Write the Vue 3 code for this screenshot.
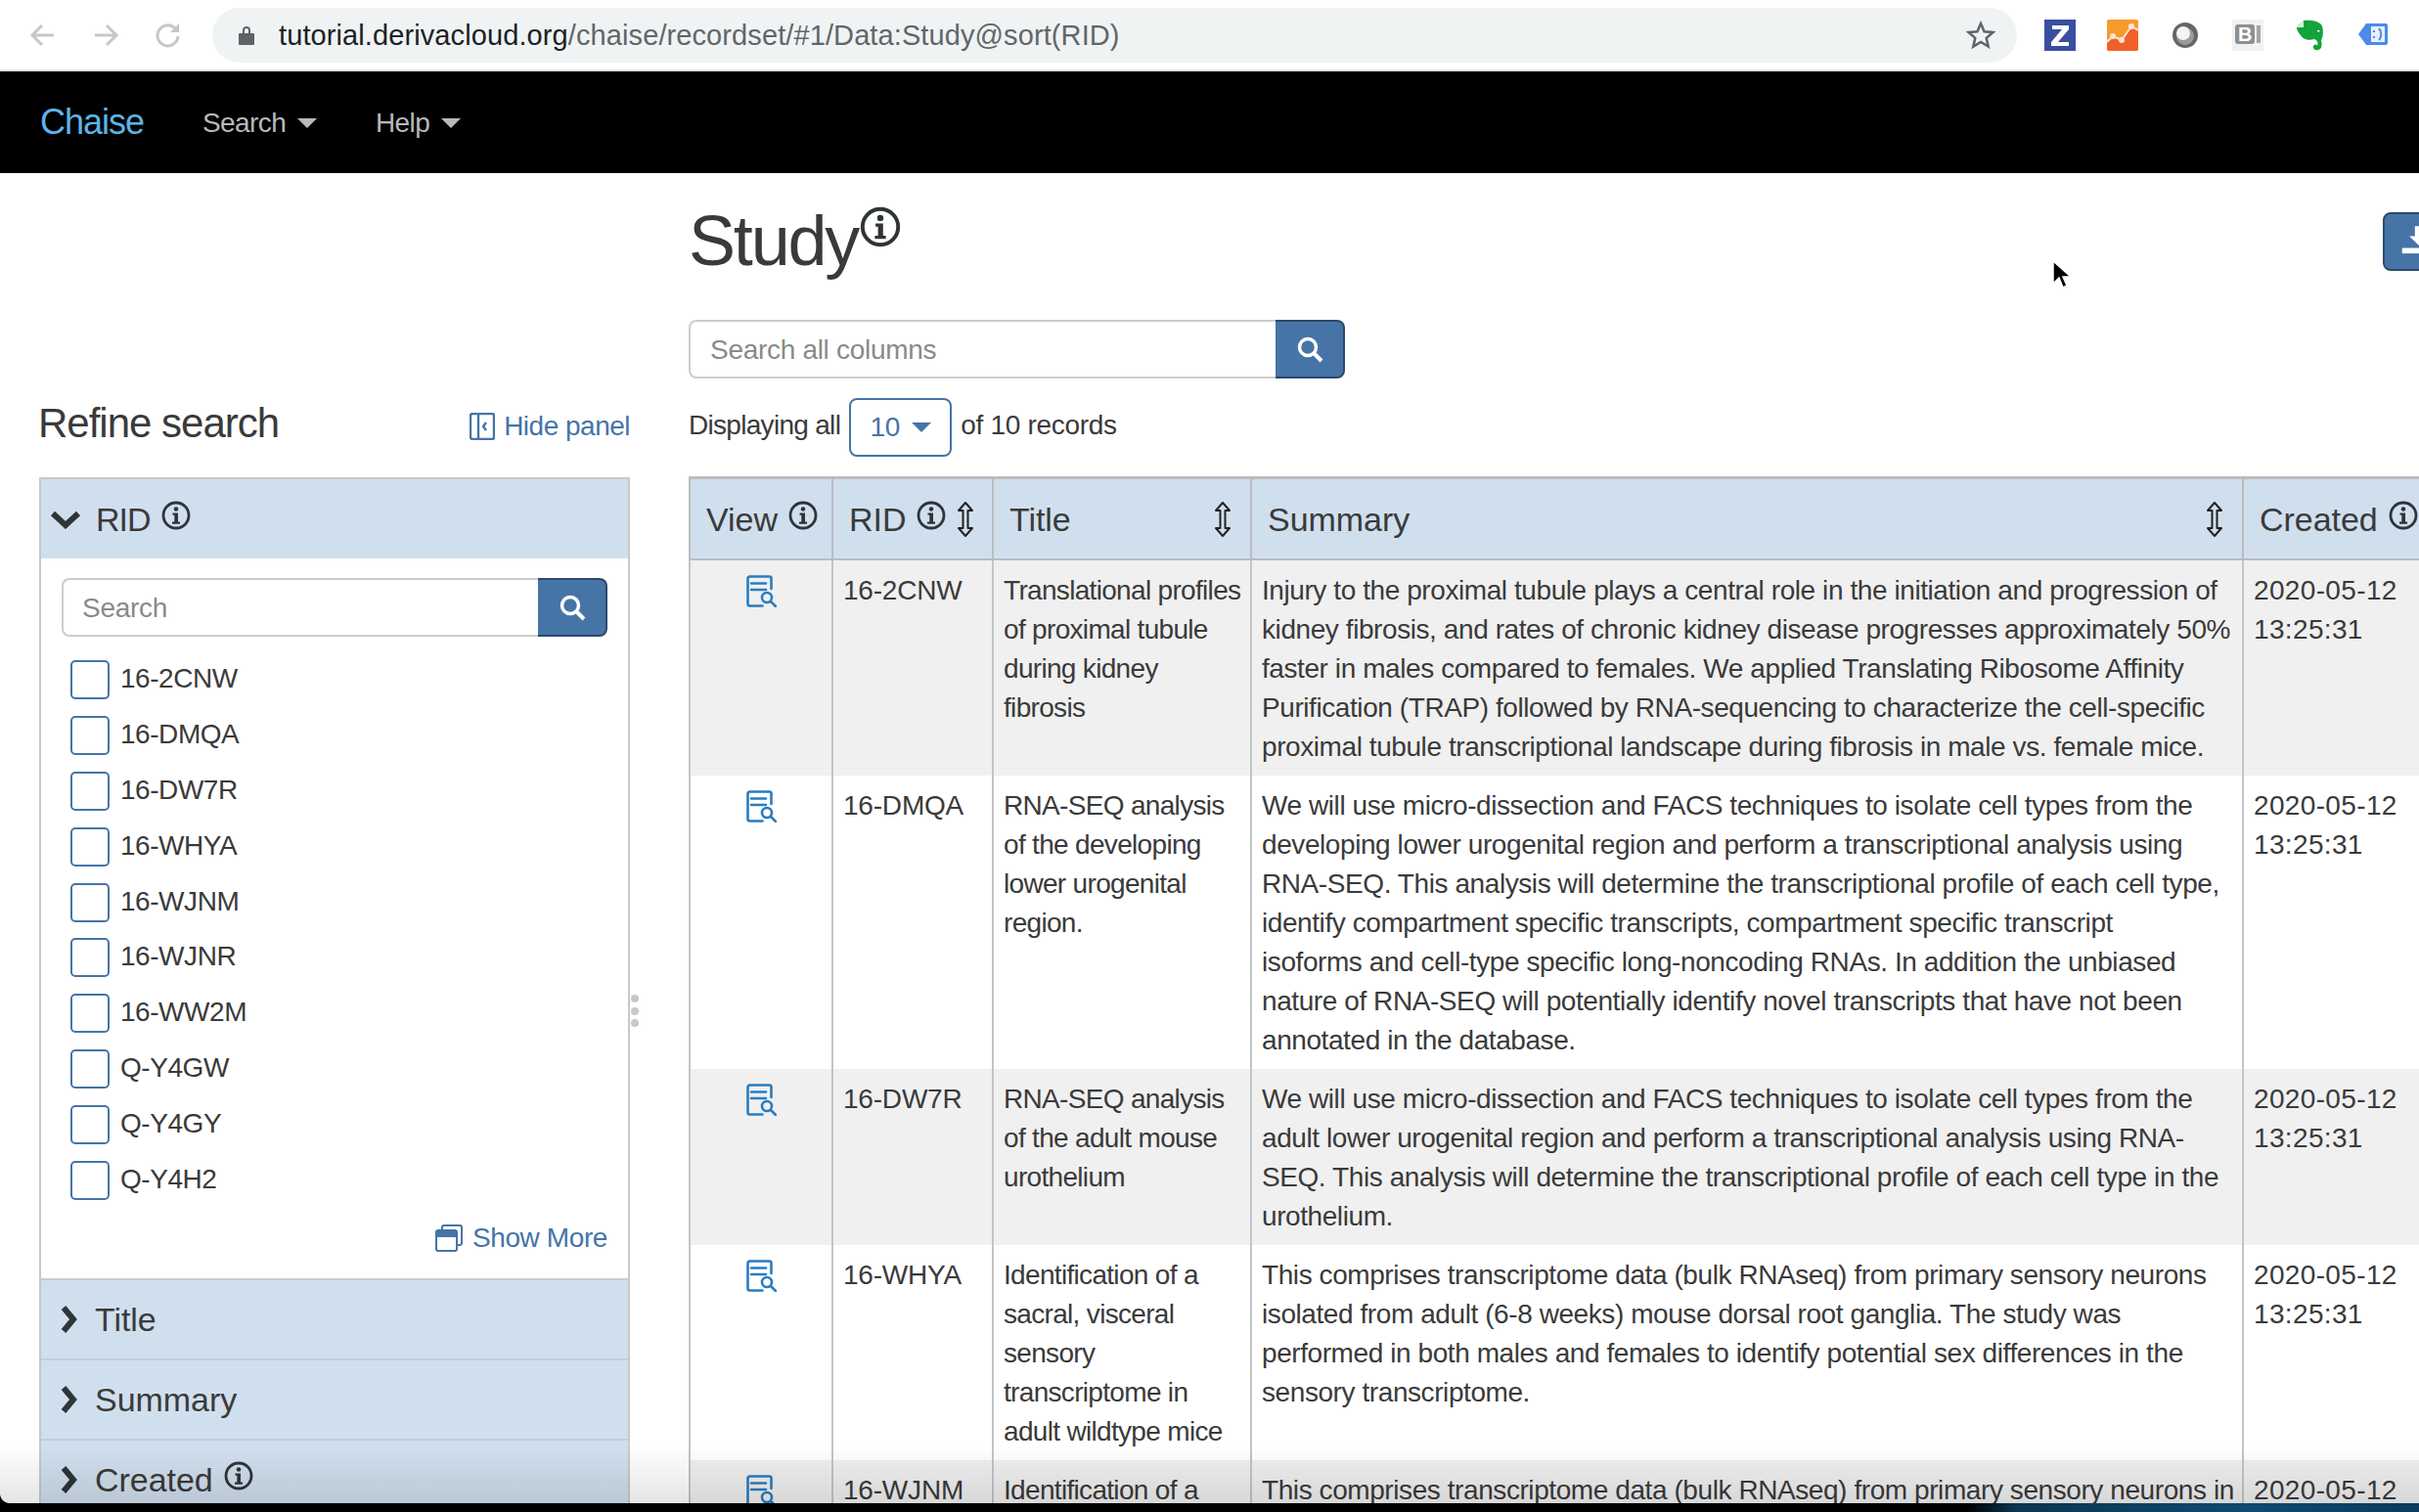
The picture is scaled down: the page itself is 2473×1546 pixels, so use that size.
<template>
  <div class="page">
    <div class="browser">
      <div class="nav-btns">
        <svg class="nav-ic" viewBox="0 0 32 32"><path d="M27 16H6M15 6 5 16l10 10" /></svg>
        <svg class="nav-ic" viewBox="0 0 32 32"><path d="M5 16h21M17 6l10 10-10 10" /></svg>
        <svg class="nav-ic" viewBox="0 0 32 32"><path d="M26 17a10.500 10.500 0 1 1-3-8" /><path class="fill" d="M27 4v9h-9z" /></svg>
      </div>
      <div class="url-pill">
        <svg class="lock" viewBox="0 0 18 22"><path d="M2 9h14a1 1 0 0 1 1 1v10a1 1 0 0 1-1 1H2a1 1 0 0 1-1-1V10a1 1 0 0 1 1-1zM5 9V6a4 4 0 0 1 8 0v3h-2V6a2 2 0 0 0-4 0v3z" /></svg>
        <span class="url"><b>tutorial.derivacloud.org</b>/chaise/recordset/#1/Data:Study@sort(RID)</span>
        <svg class="star" viewBox="0 0 30 30"><path d="m15 3 3.500 8.200 8.900.8-6.700 5.900 2 8.700-7.700-4.600-7.700 4.600 2-8.700L2.600 12l8.900-.8z" /></svg>
      </div>
      <div class="exts">
        <svg class="ext" viewBox="0 0 32 32"><rect x="0" y="0" width="32" height="32" fill="#3a4ea0" /><path d="M8 6h17v4L14 23h11v4H7v-4l11-13H8z" fill="#fff" /></svg>
        <svg class="ext" viewBox="0 0 32 32"><rect width="32" height="32" rx="2" fill="#f79a2e" /><path d="M0 23l6-6 9 4L25 7l7 4v19a2 2 0 0 1-2 2H2a2 2 0 0 1-2-2z" fill="#f2602a" /><path d="M0 23l6-6 9 4L25 7l7 4" fill="none" stroke="#fbe6d4" stroke-width="2" /><circle cx="6" cy="17" r="3" fill="#fbe6d4" /><circle cx="15" cy="21" r="3" fill="#fbe6d4" /><circle cx="25" cy="7" r="3" fill="#fbe6d4" /></svg>
        <svg class="ext" viewBox="0 0 32 32"><circle cx="16" cy="16" r="13" fill="#666" /><circle cx="16" cy="17" r="9" fill="#9a9a9a" /><circle cx="14" cy="14" r="7" fill="#f4f4f4" /></svg>
        <svg class="ext" viewBox="0 0 32 32"><rect y="0" width="32" height="32" fill="#f1f1f1" /><rect x="3" y="5" width="20" height="20" rx="3" fill="#8f8f8f" /><rect x="25" y="6" width="4" height="18" fill="#a5a5a5" /><text x="13" y="22" text-anchor="middle" class="ext-b">B</text></svg>
        <svg class="ext" viewBox="0 0 32 32"><path d="M9 1C14 0 24 1 27 5c3 5 2 13 0 16 1 5 1 9-3 10-4 1-6-2-5-4 1-2 4-2 4 0 1-3 0-6-3-7-6 2-12 0-14-4-3-3-4-6-4-8z" fill="#12a33b" /><path d="M9 1v7H2z" fill="#d6f0dc" /><rect x="23" y="11" width="2.500" height="1.500" fill="#e8f7ec" /></svg>
        <svg class="ext" viewBox="0 0 32 32"><path d="M9 4h20a2 2 0 0 1 2 2v18a2 2 0 0 1-2 2H9l-8-11z" fill="#4c8be8" /><rect x="14" y="7" width="14" height="16" rx="1" fill="#e7f0fd" /><path d="M17 11v2M17 17v2M22 9c3 3 3 9 0 12" stroke="#4c8be8" stroke-width="2" fill="none" /></svg>
      </div>
    </div>

    <nav class="navbar">
      <a class="brand">Chaise</a>
      <a class="nav-link">Search<i class="caret" /></a>
      <a class="nav-link">Help<i class="caret" /></a>
    </nav>

    <div class="content">
      <aside class="sidebar">
        <div class="side-head">
          <h2>Refine search</h2>
          <a class="link hide-link">
            <svg class="hide-ic" viewBox="0 0 26 28"><rect x="1" y="1" width="24" height="26" rx="2" /><path d="M9 1v26M17 10l-3 4 3 4" /></svg>
            Hide panel
          </a>
        </div>
        <div class="facets">
          <div class="facet-head">
            <svg class="chev-down" viewBox="0 0 32 20"><path d="M3 4l13 12L29 4" /></svg>
            <span class="facet-name rid">RID</span>
            <svg class="info info-sm" viewBox="0 0 30 30"><use href="#info-ic" /></svg>
          </div>
          <div class="facet-body">
            <div class="search-group">
              <div class="search-input">Search</div>
              <div class="search-btn"><svg viewBox="0 0 28 28"><use href="#mag-ic" /></svg></div>
            </div>
            <div class="check-list">
              <div v-for="rid in rids" :key="rid" class="check-row">
                <span class="box" />
                <span>{{ rid }}</span>
              </div>
            </div>
            <a class="link show-more">
              <svg class="more-ic" viewBox="0 0 28 28"><rect x="7" y="1" width="20" height="20" rx="2" class="more-back" /><rect x="1" y="6" width="21" height="21" rx="2" class="more-front" /><rect x="1" y="6" width="21" height="7" fill="#4674a7" /></svg>
              Show More
            </a>
          </div>
          <div v-for="f in closedFacets" :key="f.name" class="facet-head closed">
            <svg class="chev-right" viewBox="0 0 18 32"><path d="M4 4l10 12L4 28" /></svg>
            <span class="facet-name">{{ f.name }}</span>
            <svg v-if="f.info" class="info info-sm" viewBox="0 0 30 30"><use href="#info-ic" /></svg>
          </div>
        </div>
      </aside>

      <div class="splitter"><i /><i /><i /></div>

      <main class="main">
        <div class="title-row">
          <h1>Study</h1>
          <svg class="info info-lg" viewBox="0 0 30 30"><use href="#info-ic" /></svg>
        </div>
        <div class="search-group all">
          <div class="search-input">Search all columns</div>
          <div class="search-btn"><svg viewBox="0 0 28 28"><use href="#mag-ic" /></svg></div>
        </div>
        <div class="count-row">
          <span class="count-text tight">Displaying all</span>
          <div class="limit">10<i class="caret blue" /></div>
          <span class="count-text">of 10 records</span>
        </div>
        <div class="table-wrap">
          <table class="records">
            <colgroup>
              <col class="c-view" /><col class="c-rid" /><col class="c-title" /><col class="c-summary" /><col class="c-created" />
            </colgroup>
            <thead>
              <tr>
                <th><span class="th-in">View<svg class="info info-sm" viewBox="0 0 30 30"><use href="#info-ic" /></svg></span></th>
                <th><span class="th-in">RID<svg class="info info-sm" viewBox="0 0 30 30"><use href="#info-ic" /></svg><svg class="sort" viewBox="0 0 20 38"><use href="#sort-ic" /></svg></span></th>
                <th><span class="th-in spread">Title<svg class="sort" viewBox="0 0 20 38"><use href="#sort-ic" /></svg></span></th>
                <th><span class="th-in spread">Summary<svg class="sort" viewBox="0 0 20 38"><use href="#sort-ic" /></svg></span></th>
                <th><span class="th-in">Created<svg class="info info-sm" viewBox="0 0 30 30"><use href="#info-ic" /></svg></span></th>
              </tr>
            </thead>
            <tbody>
              <tr v-for="row in rows" :key="row.rid">
                <td class="view-cell">
                  <svg class="view-ic" viewBox="0 0 31 33"><path d="M25.500 14V3.500a2 2 0 0 0-2-2h-20a2 2 0 0 0-2 2v26a2 2 0 0 0 2 2h13" /><path d="M5 8.500h15M5 15h15" /><circle cx="21" cy="23" r="5" /><path d="M25 27l5 5" /></svg>
                </td>
                <td class="rid-cell">{{ row.rid }}</td>
                <td class="title-cell"><span v-for="l in row.title" :key="l" class="line">{{ l }}</span></td>
                <td class="summary-cell"><span v-for="l in row.summary" :key="l" class="line">{{ l }}</span></td>
                <td class="date-cell"><span class="line">2020-05-12</span><span class="line">13:25:31</span></td>
              </tr>
            </tbody>
          </table>
        </div>
      </main>

      <div class="export-btn">
        <svg viewBox="0 0 60 60"><path d="M33 13h8v11h6L37 34 27 24h6z" fill="#fff" /><rect x="19" y="37" width="30" height="6" fill="#fff" /></svg>
      </div>
      <svg class="cursor" viewBox="0 0 24 32"><path d="M2 2v23l6-6 4 10 4-2-4-9h8z" /></svg>
    </div>

    <div class="dock-fade" />
    <div class="corner" />
    <div class="dock" />

    <svg class="defs" width="0" height="0">
      <defs>
        <g id="info-ic">
          <circle cx="15" cy="15" r="13" fill="none" stroke="currentColor" stroke-width="2.800" />
          <circle cx="15" cy="8.500" r="2.300" fill="currentColor" />
          <path d="M11.500 12.500h5.500v9h2v2.300h-8v-2.300h2.300v-6.700h-1.800z" fill="currentColor" />
        </g>
        <g id="mag-ic" fill="none" stroke="#fff">
          <circle cx="12" cy="12" r="8.500" stroke-width="3.500" />
          <path d="M18 18l8 8" stroke-width="4" />
        </g>
        <path id="sort-ic" d="M10 2l7 8h-4.500v18H17l-7 8-7-8h4.500V10H3z" fill="none" stroke="#222" stroke-width="2" stroke-linejoin="round" />
      </defs>
    </svg>
  </div>
</template>

<script setup>
const rids = ['16-2CNW', '16-DMQA', '16-DW7R', '16-WHYA', '16-WJNM', '16-WJNR', '16-WW2M', 'Q-Y4GW', 'Q-Y4GY', 'Q-Y4H2']

const closedFacets = [
  { name: 'Title' },
  { name: 'Summary' },
  { name: 'Created', info: true },
]

const rows = [
  {
    rid: '16-2CNW',
    title: ['Translational profiles', 'of proximal tubule', 'during kidney', 'fibrosis'],
    summary: [
      'Injury to the proximal tubule plays a central role in the initiation and progression of',
      'kidney fibrosis, and rates of chronic kidney disease progresses approximately 50%',
      'faster in males compared to females. We applied Translating Ribosome Affinity',
      'Purification (TRAP) followed by RNA-sequencing to characterize the cell-specific',
      'proximal tubule transcriptional landscape during fibrosis in male vs. female mice.',
    ],
  },
  {
    rid: '16-DMQA',
    title: ['RNA-SEQ analysis', 'of the developing', 'lower urogenital', 'region.'],
    summary: [
      'We will use micro-dissection and FACS techniques to isolate cell types from the',
      'developing lower urogenital region and perform a transcriptional analysis using',
      'RNA-SEQ. This analysis will determine the transcriptional profile of each cell type,',
      'identify compartment specific transcripts, compartment specific transcript',
      'isoforms and cell-type specific long-noncoding RNAs. In addition the unbiased',
      'nature of RNA-SEQ will potentially identify novel transcripts that have not been',
      'annotated in the database.',
    ],
  },
  {
    rid: '16-DW7R',
    title: ['RNA-SEQ analysis', 'of the adult mouse', 'urothelium'],
    summary: [
      'We will use micro-dissection and FACS techniques to isolate cell types from the',
      'adult lower urogenital region and perform a transcriptional analysis using RNA-',
      'SEQ. This analysis will determine the transcriptional profile of each cell type in the',
      'urothelium.',
    ],
  },
  {
    rid: '16-WHYA',
    title: ['Identification of a', 'sacral, visceral', 'sensory', 'transcriptome in', 'adult wildtype mice'],
    summary: [
      'This comprises transcriptome data (bulk RNAseq) from primary sensory neurons',
      'isolated from adult (6-8 weeks) mouse dorsal root ganglia. The study was',
      'performed in both males and females to identify potential sex differences in the',
      'sensory transcriptome.',
    ],
  },
  {
    rid: '16-WJNM',
    title: ['Identification of a'],
    summary: ['This comprises transcriptome data (bulk RNAseq) from primary sensory neurons in'],
  },
]
</script>

<style>
html, body {
  margin: 0;
  background: #fff;
  overflow: hidden;
}
</style>

<style scoped>
.page {
  position: relative;
  width: 2473px;
  height: 1546px;
  overflow: hidden;
  font-family: "Liberation Sans", Arial, sans-serif;
  font-size: 28px;
  line-height: 40px;
  color: #3a3a3a;
  letter-spacing: -0.3px;
}

/* browser chrome */
.browser {
  height: 71px;
  display: flex;
  align-items: center;
  border-bottom: 2px solid #dfe1e3;
  background: #fff;
}
.nav-btns {
  display: flex;
  gap: 32px;
  margin-left: 28px;
  width: 189px;
}
.nav-ic {
  width: 32px;
  height: 32px;
  fill: none;
  stroke: #c6c7c9;
  stroke-width: 3;
}
.nav-ic .fill {
  fill: #c6c7c9;
  stroke: none;
}
.url-pill {
  width: 1845px;
  height: 56px;
  border-radius: 28px;
  background: #f0f3f4;
  display: flex;
  align-items: center;
  padding: 0 22px 0 26px;
  box-sizing: border-box;
}
.lock {
  width: 18px;
  height: 22px;
  fill: #5f6368;
}
.url {
  margin-left: 24px;
  flex: 1;
  color: #636669;
  font-size: 29px;
  letter-spacing: 0.1px;
}
.url b {
  font-weight: normal;
  color: #202124;
}
.star {
  width: 30px;
  height: 30px;
  fill: none;
  stroke: #5f6368;
  stroke-width: 2.500;
}
.exts {
  display: flex;
  gap: 32px;
  margin-left: 28px;
}
.ext {
  width: 32px;
  height: 32px;
}
.ext-b {
  font-family: "Liberation Sans", sans-serif;
  font-weight: bold;
  font-size: 20px;
  fill: #fff;
}

/* site nav */
.navbar {
  height: 104px;
  background: #000;
  display: flex;
  align-items: center;
  color: #b9b9b9;
  padding-left: 41px;
}
.brand {
  color: #5db4e8;
  font-size: 36px;
  letter-spacing: -1px;
  width: 166px;
}
.nav-link {
  display: flex;
  align-items: center;
  width: 177px;
  padding-top: 2px;
  letter-spacing: -0.6px;
}
.caret {
  display: inline-block;
  width: 0;
  height: 0;
  margin-left: 12px;
  border-left: 10px solid transparent;
  border-right: 10px solid transparent;
  border-top: 10px solid #b9b9b9;
}
.caret.blue {
  border-top-color: #4674a7;
}

/* page body */
.content {
  position: relative;
  display: flex;
  height: 1360px;
}
.sidebar {
  width: 604px;
  margin-left: 40px;
  padding-top: 231px;
  flex: none;
}
.side-head {
  display: flex;
  align-items: center;
  justify-content: space-between;
  height: 50px;
  margin-bottom: 30px;
}
.side-head h2 {
  margin: 0 0 0 -1px;
  font-size: 42px;
  font-weight: normal;
  letter-spacing: -1px;
  line-height: 50px;
}
.link {
  color: #4674a7;
  display: flex;
  align-items: center;
}
.hide-link {
  gap: 9px;
  padding-top: 6px;
  letter-spacing: -0.5px;
}
.hide-ic {
  width: 26px;
  height: 28px;
  fill: none;
  stroke: #4674a7;
  stroke-width: 2.400;
}
.facets {
  border: 2px solid #c8c8c8;
  border-bottom: none;
  box-sizing: border-box;
}
.facet-head {
  height: 81px;
  display: flex;
  align-items: center;
  background: #d0dfee;
  font-size: 34px;
  padding-left: 9px;
  letter-spacing: -1px;
}
.facet-head.closed {
  height: 82px;
  box-sizing: border-box;
  border-bottom: 2px solid #c5cdd6;
  padding-left: 18px;
  letter-spacing: -0.05px;
}
.facet-name {
  margin-left: 17px;
}
.facet-name.rid {
  margin-left: 15px;
}
.chev-down {
  width: 32px;
  height: 20px;
  fill: none;
  stroke: #2f3437;
  stroke-width: 6;
}
.chev-right {
  width: 20px;
  height: 32px;
  fill: none;
  stroke: #2f3437;
  stroke-width: 6;
}
.facet-body {
  background: #fff;
  border-bottom: 2px solid #c5cdd6;
  padding: 20px 21px 0;
  height: 738px;
  box-sizing: border-box;
}
.search-group {
  display: flex;
  height: 60px;
}
.search-input {
  flex: 1;
  box-sizing: border-box;
  border: 2px solid #ccc;
  border-right: none;
  border-radius: 8px 0 0 8px;
  color: #8a8a8a;
  padding-left: 19px;
  line-height: 58px;
  background: #fff;
}
.search-btn {
  width: 71px;
  box-sizing: border-box;
  background: #4674a7;
  border: 2px solid #2b4a6b;
  border-left: none;
  border-radius: 0 8px 8px 0;
  display: flex;
  align-items: center;
  justify-content: center;
}
.search-btn svg {
  width: 28px;
  height: 28px;
}
.check-list {
  margin-top: 24px;
  margin-left: 9px;
  letter-spacing: -0.45px;
}
.check-row {
  height: 56.900px;
  display: flex;
  gap: 11px;
  line-height: 37px;
}
.box {
  width: 40px;
  height: 40px;
  box-sizing: border-box;
  border: 2px solid #4674a7;
  border-radius: 5px;
  background: #fff;
}
.show-more {
  justify-content: flex-end;
  gap: 10px;
  margin-top: 2px;
  letter-spacing: -0.4px;
}
.more-ic {
  width: 28px;
  height: 28px;
}
.more-back {
  fill: #fff;
  stroke: #4674a7;
  stroke-width: 2;
}
.more-front {
  fill: #fff;
  stroke: #4674a7;
  stroke-width: 2;
}

/* splitter */
.splitter {
  width: 60px;
  flex: none;
  box-sizing: border-box;
  padding-top: 840px;
  padding-left: 1px;
  display: flex;
  flex-direction: column;
  gap: 4.500px;
}
.splitter i {
  width: 8px;
  height: 8px;
  border-radius: 50%;
  background: #c8c8c8;
}

.main {
  flex: 1;
  min-width: 0;
}
.title-row {
  display: flex;
  height: 150px;
  align-items: flex-start;
}
.title-row h1 {
  margin: 29px 0 0;
  font-size: 72px;
  font-weight: normal;
  letter-spacing: -2.200px;
  line-height: 80px;
}
.info {
  color: #2f3437;
  flex: none;
}
.info-lg {
  width: 42px;
  height: 42px;
  margin: 34px 0 0 2px;
}
.info-sm {
  width: 30px;
  height: 30px;
  margin-left: 11px;
  transform: translateY(-4px);
}
.search-group.all {
  width: 671px;
}
.search-group.all .search-input {
  padding-left: 20px;
}
.count-row {
  display: flex;
  align-items: center;
  gap: 9px;
  margin-top: 20px;
  height: 60px;
}
.count-text {
  position: relative;
  top: -2px;
}
.count-text.tight {
  letter-spacing: -0.7px;
}
.limit {
  box-sizing: border-box;
  width: 105px;
  height: 60px;
  border: 2px solid #4674a7;
  border-radius: 8px;
  color: #4674a7;
  display: flex;
  align-items: center;
  justify-content: center;
}
.table-wrap {
  margin-top: 20px;
}
.records {
  width: 1900px;
  table-layout: fixed;
  border-collapse: collapse;
}
.c-view { width: 146px; }
.c-rid { width: 164px; }
.c-title { width: 264px; }
.c-summary { width: 1014px; }
.c-created { width: 312px; }
.records th {
  height: 83px;
  padding: 0 16px;
  background: #d0dfee;
  border: 2px solid #b9bcbf;
  border-top-width: 3px;
  font-size: 34px;
  font-weight: normal;
  text-align: left;
  letter-spacing: -0.05px;
  box-sizing: border-box;
}
.th-in {
  display: flex;
  align-items: center;
  padding-top: 1px;
}
.th-in.spread {
  justify-content: space-between;
}
.sort {
  width: 20px;
  height: 38px;
  flex: none;
  margin-left: 10px;
}
.spread .sort {
  margin-right: 2px;
}
.records td {
  padding: 11px 10px 9px;
  vertical-align: top;
  border-left: 2px solid #c4c4c4;
  border-right: 2px solid #c4c4c4;
  white-space: nowrap;
}
.records tbody tr:nth-child(odd) {
  background: #f0f0f0;
}
.line {
  display: block;
}
.rid-cell {
  letter-spacing: -0.2px;
}
.records .title-cell {
  letter-spacing: -0.68px;
}
.records .summary-cell {
  padding-left: 10px;
  letter-spacing: -0.42px;
}
.date-cell {
  letter-spacing: 0.35px;
}
.view-cell {
  text-align: center;
}
.view-ic {
  display: block;
  width: 31px;
  height: 33px;
  margin: 4px auto 0;
  fill: none;
  stroke: #2a7cc0;
  stroke-width: 2.600;
  stroke-linecap: round;
}

/* things over the page */
.export-btn {
  position: absolute;
  left: 2436px;
  top: 40px;
  width: 60px;
  height: 60px;
  box-sizing: border-box;
  background: #4674a7;
  border: 2px solid #2b4a6b;
  border-radius: 8px;
  overflow: hidden;
}
.export-btn svg {
  display: block;
  width: 56px;
  height: 56px;
}
.cursor {
  position: absolute;
  left: 2097px;
  top: 88px;
  width: 24px;
  height: 32px;
  fill: #000;
  stroke: #fff;
  stroke-width: 1.500;
}
.dock-fade {
  position: absolute;
  left: 0;
  right: 0;
  bottom: 9px;
  height: 60px;
  background: linear-gradient(to bottom, rgba(0, 0, 0, 0), rgba(0, 0, 0, 0.1));
  pointer-events: none;
}
.corner {
  position: absolute;
  left: 0;
  bottom: 9px;
  width: 10px;
  height: 10px;
  background: radial-gradient(circle at top right, transparent 9.500px, #000 10.500px);
}
.dock {
  position: absolute;
  left: 0;
  right: 0;
  bottom: 0;
  height: 9px;
  background: linear-gradient(to right, #000 0, #000 2010px, #0b3550 2060px, #0f4a70 2300px, #0b3a5c 100%);
}
.defs {
  position: absolute;
}
</style>
